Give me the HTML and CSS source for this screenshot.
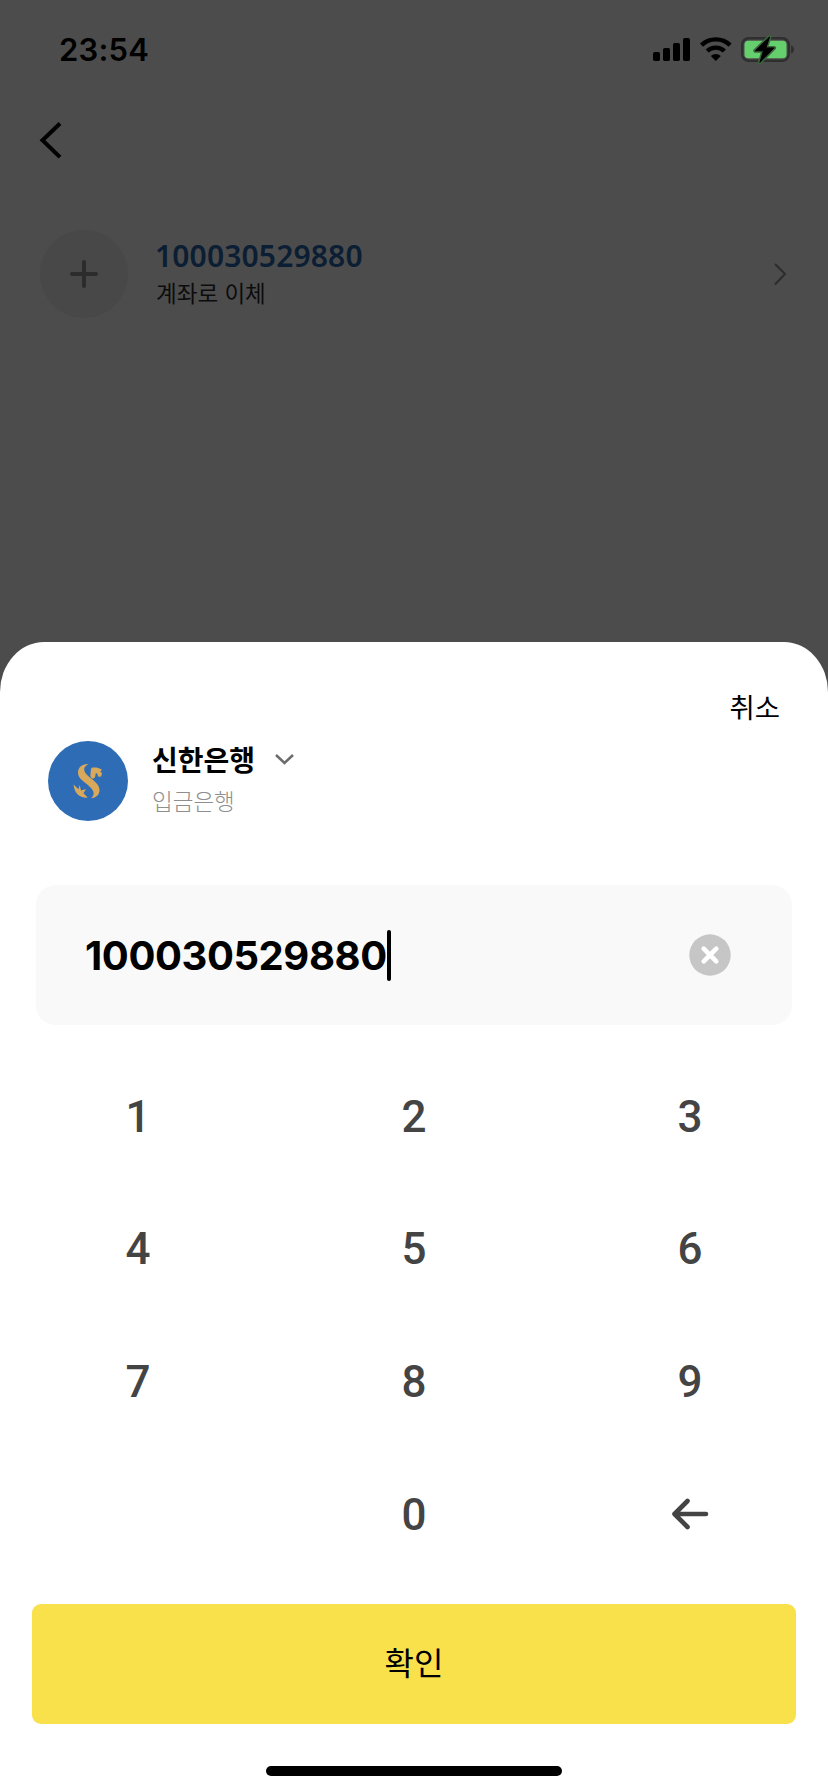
FILE: index.html
```html
<!DOCTYPE html>
<html lang="ko">
<head>
<meta charset="utf-8">
<meta name="viewport" content="width=device-width">
<title>계좌 이체</title>
<link rel="stylesheet" href="styles.css">
</head>
<body>
<div class="screen">
  <header class="status">
    <span class="time">23:54</span>
    <svg class="status-icons" width="144" height="32" viewBox="0 0 144 32">
      <rect x="1" y="18" width="7" height="9" rx="1.7"/>
      <rect x="11" y="14" width="7" height="13" rx="1.7"/>
      <rect x="21" y="9" width="7" height="18" rx="1.7"/>
      <rect x="31" y="4" width="7" height="23" rx="1.7"/>
      <g fill="none" stroke="#000" stroke-width="4.4">
        <path d="M49.500 11.100a20.600 20.600 0 0 1 28.600 0"/>
        <path d="M55.200 17a12.600 12.600 0 0 1 17.200 0"/>
      </g>
      <path d="M63.800 27l-5-5.100a7.300 7.300 0 0 1 10 0z"/>
      <rect x="90.200" y="4.200" width="46.600" height="22.600" rx="6.500" fill="none" stroke="#2f2f2f" stroke-width="2.400"/>
      <rect x="92.500" y="6.700" width="42" height="17.600" rx="3.800" fill="#65cf6d"/>
      <path d="M139 11.500c4 1 4 7 0 8z" fill="#2f2f2f"/>
      <path d="M117.500 3L103.300 16.800h8.200l-3.600 11.600 14.200-14.500h-8.200z" stroke="#3d653f" stroke-width="4" stroke-linejoin="round"/>
      <path d="M117.500 3L103.300 16.800h8.200l-3.600 11.600 14.200-14.500h-8.200z" stroke="#000" stroke-width="1" stroke-linejoin="round"/>
    </svg>
  </header>
  <nav class="nav">
    <svg width="24" height="40" viewBox="0 0 24 40"><path d="M22 3.500L4.500 20.300l17.500 16.800" fill="none" stroke="#000" stroke-width="4"/></svg>
  </nav>
  <section class="transfer">
    <span class="add">
      <svg width="30" height="30" viewBox="0 0 30 30"><path d="M15 3v24M3 15h24" stroke="#2c2c2c" stroke-width="4" stroke-linecap="round"/></svg>
    </span>
    <div class="transfer-text">
      <div class="transfer-number">100030529880</div>
      <div class="transfer-label">계좌로 이체</div>
    </div>
    <svg class="next" width="16" height="24" viewBox="0 0 16 24"><path d="M3 2l10 10L3 22.500" fill="none" stroke="#2c2c2c" stroke-width="2"/></svg>
  </section>
  <main class="sheet">
    <div class="cancel">취소</div>
    <div class="bank">
      <svg class="logo" width="80" height="80" viewBox="0 0 80 80">
        <circle cx="40" cy="40" r="40" fill="#2e6cb6"/>
        <g fill="#d9a95b">
          <path d="M40.500 23C34 22.600 30 26.500 30 31.500c0 5.500 5 8.300 9 11.800 4.200 3.700 7 6.500 6.600 9.700-.3 2-1.200 3-2.600 4.200 5 0 8.500-3.700 8.500-8 0-4.500-3.500-7.600-7.300-10.900-4.300-3.700-8.400-6.600-8-10.300.2-2 2-3.600 4.300-5z"/>
          <path d="M43.500 27c1.800-1 3.500-.3 5-.6 2 .6 4 1 5.500 2.600l-1.800 1.300 1.800 2-.8 3.200-2.800.3-1.400-3.600c-2-.4-1.200 1-1.700 3-.4 1.500-1.300 2-2.300 2.500-1.500-.5-2.500-1.500-2.700-3 .6-2.200 0-5.400 1.200-7.700z"/>
          <path d="M25.500 43.500l5 4.800 1.200-4.300 1.300 5.600 5-1.600-2.500 4.300 4.200 4.300c-8 .5-13.200-4-14.200-13.100z"/>
        </g>
      </svg>
      <div class="bank-text">
        <div class="bank-name">신한은행
          <svg width="22" height="14" viewBox="0 0 22 14"><path d="M3 3l8.500 8L20 3" fill="none" stroke="#6c6c6c" stroke-width="2.500"/></svg>
        </div>
        <div class="bank-role">입금은행</div>
      </div>
    </div>
    <div class="field">
      <span class="value">100030529880</span><i class="caret"></i>
      <svg class="clear" width="42" height="42" viewBox="0 0 42 42"><circle cx="21" cy="21" r="20.700" fill="#c6c6c6"/><path d="M14.700 14.700l12.600 12.600M27.300 14.700L14.700 27.300" stroke="#fff" stroke-width="4.600" stroke-linecap="round"/></svg>
    </div>
    <div class="keypad">
      <span>1</span><span>2</span><span>3</span>
      <span>4</span><span>5</span><span>6</span>
      <span>7</span><span>8</span><span>9</span>
      <span></span><span>0</span>
      <span><svg width="40" height="34" viewBox="0 0 40 34"><path d="M17.500 3L4.500 16l13 13M5 16h31" fill="none" stroke="#444" stroke-width="4.600" stroke-linecap="round" stroke-linejoin="round"/></svg></span>
    </div>
    <div class="confirm"><span>확인</span></div>
    <div class="home"></div>
  </main>
</div>
</body>
</html>
```
FILE: styles.css
```css
body {
  margin: 0;
  background: #4c4c4c;
  font-family: "Noto Sans CJK KR", sans-serif;
  color: #000;
}
svg { display: block; flex: none; }
.screen {
  display: flex;
  flex-direction: column;
  width: 828px;
  height: 1792px;
  overflow: hidden;
}
.status {
  display: flex;
  align-items: center;
  justify-content: space-between;
  height: 100px;
  padding: 0 32px 0 59px;
  box-sizing: border-box;
}
.time {
  font: 600 31px/40px Inter, sans-serif;
  letter-spacing: 0.2px;
}
.nav {
  height: 110px;
  padding: 20px 0 0 38px;
  box-sizing: border-box;
}
.transfer {
  display: flex;
  align-items: center;
  height: 88px;
  margin-top: 20px;
  padding: 0 40px;
}
.add {
  display: flex;
  align-items: center;
  justify-content: center;
  width: 88px;
  height: 88px;
  border-radius: 50%;
  background: #484848;
}
.transfer-text { flex: 1; padding-left: 27px; }
.transfer-number {
  font: 600 30px/36px "Noto Sans", sans-serif;
  letter-spacing: 0.15px;
  color: #0b1e33;
}
.transfer-label {
  padding-left: 1px;
  font-size: 22.500px;
  line-height: 36px;
  color: #0c0c0c;
}
.sheet {
  display: flex;
  flex-direction: column;
  height: 1150px;
  margin-top: auto;
  background: #fff;
  border-radius: 44px 44px 0 0 / 50px 50px 0 0;
}
.cancel {
  align-self: flex-end;
  margin: 44px 48px 0 0;
  font-size: 27.500px;
  line-height: 40px;
}
.bank {
  display: flex;
  height: 80px;
  margin: 15px 0 0 48px;
}
.bank-text { padding-left: 24px; }
.bank-name {
  display: flex;
  align-items: center;
  gap: 18px;
  height: 36px;
  font-size: 28px;
  font-weight: 700;
}
.bank-role {
  font-size: 22.500px;
  font-weight: 300;
  line-height: 46px;
  color: #8e8e8e;
}
.field {
  display: flex;
  align-items: center;
  height: 140px;
  margin: 64px 36px 0;
  padding: 0 61px 0 49px;
  box-sizing: border-box;
  border-radius: 20px;
  background: #f9f9f9;
}
.value {
  padding-top: 1px;
  font: 700 40px/50px Inter, sans-serif;
  letter-spacing: -0.42px;
}
.caret {
  width: 4px;
  height: 51px;
  border-radius: 2px;
  background: #000;
}
.clear { margin-left: auto; }
.keypad {
  display: grid;
  grid-template-columns: repeat(3, 276px);
  grid-auto-rows: 132.600px;
  margin-top: 25.500px;
}
.keypad span {
  display: flex;
  align-items: center;
  justify-content: center;
  font: 500 44px/50px Roboto, sans-serif;
  color: #444;
}
.confirm {
  display: flex;
  align-items: center;
  justify-content: center;
  height: 120px;
  margin: auto 32px 42px;
  padding-bottom: 6px;
  box-sizing: border-box;
  border-radius: 9px;
  background: #f9e14b;
  font-size: 32px;
}
.home {
  width: 296px;
  height: 10px;
  margin: 0 auto 16px;
  border-radius: 5px;
  background: #000;
}
```
